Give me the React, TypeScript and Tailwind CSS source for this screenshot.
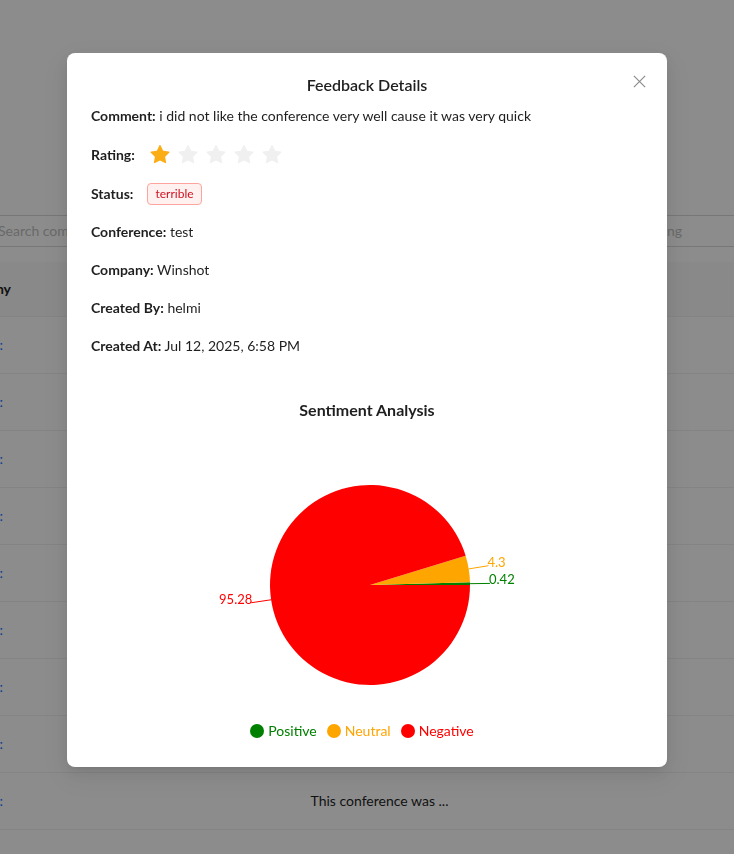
import React from 'react';

const font = { fontFamily: 'Lato, "Open Sans", sans-serif' };

const slices = [
  { name: 'Positive', value: 0.42, color: '#008000' },
  { name: 'Neutral', value: 4.3, color: '#FFA500' },
  { name: 'Negative', value: 95.28, color: '#FF0000' },
];

const CX = 279;
const CY = 163;
const R = 100;
const RAD = Math.PI / 180;

function polar(angle: number, r: number) {
  return { x: CX + r * Math.cos(angle * RAD), y: CY - r * Math.sin(angle * RAD) };
}

function sectorPath(a1: number, a2: number) {
  const p1 = polar(a1, R);
  const p2 = polar(a2, R);
  const large = a2 - a1 > 180 ? 1 : 0;
  return `M${CX},${CY} L${p1.x},${p1.y} A${R},${R} 0 ${large} 0 ${p2.x},${p2.y} Z`;
}

function SentimentPie() {
  const total = slices.reduce((s, d) => s + d.value, 0);
  let start = 0;
  const arcs = slices.map((d) => {
    const sweep = (d.value / total) * 360;
    const a = { ...d, start, end: start + sweep, mid: start + sweep / 2 };
    start += sweep;
    return a;
  });

  return (
    <svg width="552" height="300" viewBox="0 0 552 300">
      {arcs.map((a) => (
        <path key={a.name} d={sectorPath(a.start, a.end)} fill={a.color} />
      ))}
      {arcs.map((a) => {
        const p1 = polar(a.mid, R);
        const p2 = polar(a.mid, R + 20);
        const right = p2.x > CX;
        return (
          <g key={a.name + '-label'}>
            <path d={`M${p1.x},${p1.y} L${p2.x},${p2.y}`} stroke={a.color} fill="none" />
            <text
              x={right ? p2.x - 1 : p2.x + 1}
              y={p2.y - 4}
              fill={a.color}
              textAnchor={right ? 'start' : 'end'}
              dominantBaseline="central"
              fontSize="13"
              style={font}
            >
              {a.value}
            </text>
          </g>
        );
      })}
    </svg>
  );
}

function Star({ filled }: { filled: boolean }) {
  return (
    <svg viewBox="64 64 896 896" className="w-5 h-5" fill={filled ? '#faad14' : '#f0f0f0'}>
      <path d="M908 353.1l-253.9-36.9L540.7 86.1c-3.1-6.3-8.2-11.4-14.5-14.5-15.8-7.8-35-1.3-42.9 14.5L369.8 316.2l-253.9 36.9c-7 1-13.4 4.3-18.3 9.3a32.05 32.05 0 00.6 45.3l183.7 179.1-43.4 252.9a31.950 31.95 0 0046.4 33.7L512 754l227.1 119.4c6.2 3.3 13.4 4.4 20.3 3.2 17.4-3 29.1-19.5 26.1-36.9l-43.4-252.9 183.7-179.1c5-4.9 8.3-11.3 9.3-18.3 2.7-17.5-9.5-33.7-27-36.3z" />
    </svg>
  );
}

function Field({ label, value }: { label: string; value: string }) {
  return (
    <p className="mb-4 leading-[22px]">
      <span className="font-bold">{label}</span> {value}
    </p>
  );
}

function BackgroundPage() {
  const rows = Array.from({ length: 10 });
  return (
    <div className="min-h-screen bg-white overflow-hidden text-sm text-[#1f1f1f]" style={font}>
      <div className="h-[215px]" />
      {/* search bar */}
      <div className="flex h-8">
        <div className="-ml-[14px] w-[360px] border-y border-r border-[#d9d9d9] px-3 flex items-center text-[#bfbfbf]">
          Search comments
        </div>
        <div className="flex-1 -mr-[6px] border border-[#d9d9d9] pr-[57px] flex items-center justify-end text-[#bfbfbf]">
          Filter by rating
        </div>
      </div>
      <div className="h-[15px]" />
      {/* table header */}
      <div className="flex h-[55px] items-center bg-[#fafafa] border-b border-[#f0f0f0] font-bold">
        <div className="-ml-[60px] w-[71px] text-right">Company</div>
        <div className="flex-1 text-center">Comment</div>
      </div>
      {rows.map((_, i) => (
        <div key={i} className="flex h-[57px] items-center border-b border-[#f0f0f0]">
          <div className="-ml-[60px] w-[63px] text-right text-[#1677ff]">View:</div>
          <div className="flex-1 text-center">
            {i < 9 && <span className="inline-block ml-[22px]">This conference was ...</span>}
          </div>
        </div>
      ))}
    </div>
  );
}

export default function App() {
  const total = 5;
  return (
    <div className="relative">
      <BackgroundPage />
      <div className="fixed inset-0 bg-black/45 flex justify-center pt-[53px]" style={font}>
        <div className="w-[600px] h-[714px] bg-white rounded-lg shadow-[0_6px_16px_0_rgba(0,0,0,0.08),0_3px_6px_-4px_rgba(0,0,0,0.12),0_9px_28px_8px_rgba(0,0,0,0.05)] px-6 pt-5 pb-[25px] text-sm text-[#1f1f1f] relative">
          <button className="absolute right-[18px] top-[18px] w-5 h-5 flex items-center justify-center text-[#8c8c8c]">
            <svg viewBox="0 0 16 16" className="w-[15px] h-[15px]" stroke="currentColor" strokeWidth="1.3" fill="none">
              <path d="M2 2 L14 14 M14 2 L2 14" />
            </svg>
          </button>
          <div className="text-center text-base font-semibold leading-6 mb-2">Feedback Details</div>

          <Field label="Comment:" value="i did not like the conference very well cause it was very quick" />

          <div className="mb-4 h-6 flex items-center">
            <span className="font-bold mr-[15px]">Rating:</span>
            <div className="flex gap-2">
              {Array.from({ length: total }).map((_, i) => (
                <Star key={i} filled={i < 1} />
              ))}
            </div>
          </div>

          <div className="mb-4 h-[22px] flex items-center">
            <span className="font-bold mr-[14px]">Status:</span>
            <span className="h-[22px] px-[7px] flex items-center rounded border border-[#ffa39e] bg-[#fff1f0] text-[#cf1322] text-xs">
              terrible
            </span>
          </div>

          <Field label="Conference:" value="test" />
          <Field label="Company:" value="Winshot" />
          <Field label="Created By:" value="helmi" />
          <Field label="Created At:" value="Jul 12, 2025, 6:58 PM" />

          <div className="mt-[41px]">
            <div className="text-center text-base font-bold leading-6">Sentiment Analysis</div>
            <SentimentPie />
            <div className="flex justify-center leading-5 -mt-[1px]">
              {slices.map((s) => (
                <div key={s.name} className="flex items-center mr-[10px]" style={{ color: s.color }}>
                  <span className="w-[14px] h-[14px] rounded-full mr-1" style={{ background: s.color }} />
                  <span>{s.name}</span>
                </div>
              ))}
            </div>
          </div>
        </div>
      </div>
    </div>
  );
}
